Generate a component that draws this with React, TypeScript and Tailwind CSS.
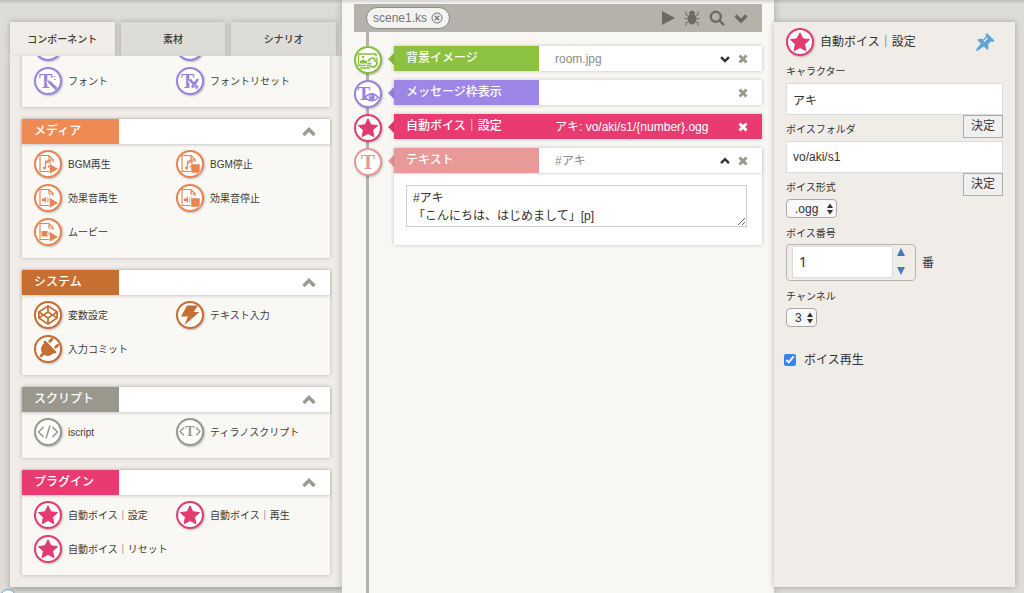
import { useState, type ReactNode } from "react";
import { FaCodepen, FaPlug } from "react-icons/fa";

type IconName =
  | "blank" | "font" | "fontReset" | "bgmPlay" | "bgmStop" | "sePlay" | "seStop" | "movie"
  | "codepen" | "bolt" | "plug" | "code" | "tyrano" | "star" | "image" | "message" | "text";

type Group = {
  title: string;
  bar: string;
  color: string;
  items: { label: string; icon: IconName }[];
};

const groups: Group[] = [
  {
    title: "",
    bar: "bg-[#9d86e6]",
    color: "text-[#9683dc]",
    items: [
      { label: "", icon: "blank" },
      { label: "", icon: "blank" },
      { label: "フォント", icon: "font" },
      { label: "フォントリセット", icon: "fontReset" },
    ],
  },
  {
    title: "メディア",
    bar: "bg-[#f08a54]",
    color: "text-[#e98350]",
    items: [
      { label: "BGM再生", icon: "bgmPlay" },
      { label: "BGM停止", icon: "bgmStop" },
      { label: "効果音再生", icon: "sePlay" },
      { label: "効果音停止", icon: "seStop" },
      { label: "ムービー", icon: "movie" },
    ],
  },
  {
    title: "システム",
    bar: "bg-[#c66f31]",
    color: "text-[#c66d32]",
    items: [
      { label: "変数設定", icon: "codepen" },
      { label: "テキスト入力", icon: "bolt" },
      { label: "入力コミット", icon: "plug" },
    ],
  },
  {
    title: "スクリプト",
    bar: "bg-[#9a978d]",
    color: "text-[#9a978d]",
    items: [
      { label: "iscript", icon: "code" },
      { label: "ティラノスクリプト", icon: "tyrano" },
    ],
  },
  {
    title: "プラグイン",
    bar: "bg-[#e93a72]",
    color: "text-[#e23b70]",
    items: [
      { label: "自動ボイス｜設定", icon: "star" },
      { label: "自動ボイス｜再生", icon: "star" },
      { label: "自動ボイス｜リセット", icon: "star" },
    ],
  },
];

const serif = { fontFamily: '"Liberation Serif", serif', fontWeight: 700 };

function FileShape() {
  return <path d="M13 19.500H4V3.500H13L17 7.500V10M13 3.500V8H17" fill="none" stroke="currentColor" strokeWidth="1.200" />;
}

function Note() {
  return (
    <g>
      <path d="M9.500 16V9.500L14 8V14M9.500 11L14 9.500" fill="none" stroke="currentColor" strokeWidth="1.200" />
      <circle cx="8.500" cy="16" r="1.500" fill="currentColor" />
      <circle cx="13" cy="14.500" r="1.300" fill="currentColor" />
    </g>
  );
}

function Speaker() {
  return (
    <g>
      <path d="M6 12.500H8L10 10.500V17L8 15H6Z" fill="currentColor" />
      <path d="M11.500 11.500Q13 13.700 11.500 16M13.500 10.500Q15.500 13.700 13.500 17" fill="none" stroke="currentColor" />
    </g>
  );
}

const play = <path d="M13.500 11.500L22.500 17L13.500 22Z" fill="currentColor" stroke="#fff" strokeWidth=".5" />;
const stop = <path d="M13 12H22V21H13Z" fill="currentColor" stroke="#fff" strokeWidth=".5" />;

const glyphs: Record<IconName, ReactNode> = {
  blank: null,
  font: (
    <g>
      <text x="3" y="18.500" fontSize="20" fill="currentColor" style={serif}>T</text>
      <path d="M11.500 11.500L20 20" stroke="#fff" strokeWidth="5" />
      <path d="M12 11.500L20.500 20" stroke="currentColor" strokeWidth="3" />
      <path d="M12.500 11L14.500 13" stroke="#fff" strokeWidth="1" />
      <path d="M16 8.500l1-1M18 10.500h1.500M18.500 8l1-1" stroke="currentColor" />
    </g>
  ),
  fontReset: (
    <g>
      <text x="3" y="18.500" fontSize="20" fill="currentColor" style={serif}>T</text>
      <path d="M20.500 9L13 20M11 11L17 16" stroke="#fff" strokeWidth="4" />
      <path d="M20 10L14 18.500M11.500 10.500L15.500 14.500" stroke="currentColor" strokeWidth="2.500" />
      <path d="M18.500 15.500v4.500M16.500 17.800h4" stroke="currentColor" strokeWidth="1.500" />
    </g>
  ),
  bgmPlay: <g><FileShape /><Note />{play}</g>,
  bgmStop: <g><FileShape /><Note />{stop}</g>,
  sePlay: <g><FileShape /><Speaker />{play}</g>,
  seStop: <g><FileShape /><Speaker />{stop}</g>,
  movie: (
    <g>
      <FileShape />
      <path d="M5.500 11H11.500V16.500H5.500ZM12 13.500L14 11.500V16Z" fill="currentColor" />
      {play}
    </g>
  ),
  codepen: <FaCodepen x="2" y="2" size={20} />,
  bolt: <path d="M9 2.500H20L15.500 9H21.500L6.500 22L10 13.500H3Z" fill="currentColor" />,
  plug: <g transform="rotate(45 12 12)"><FaPlug x="1" y="1" size={22} /></g>,
  code: <path d="M7.500 7L2.500 12L7.500 17M16.500 7L21.500 12L16.500 17M14 5.500L10 18.500" fill="none" stroke="currentColor" strokeWidth="1.500" />,
  tyrano: (
    <g>
      <path d="M6 7.500L2 11.500L6 15.500M18 7.500L22 11.500L18 15.500" fill="none" stroke="currentColor" strokeWidth="1.400" />
      <text x="12" y="16" fontSize="14" textAnchor="middle" fill="currentColor" style={serif}>T</text>
    </g>
  ),
  star: (
    <path
      d="M12 2.800L14.900 8.800L21.500 9.600L16.600 14.100L17.900 20.700L12 17.500L6.100 20.700L7.400 14.100L2.500 9.600L9.100 8.800Z"
      fill="currentColor" stroke="currentColor" strokeWidth="1" strokeLinejoin="round"
    />
  ),
  image: (
    <g fill="none" stroke="currentColor">
      <path d="M20 8.500V6H2.500V17.500H10" strokeWidth="1.500" />
      <path d="M4 15.500V13L7.500 11.500L10 13L14 10.500V15.500Z" fill="currentColor" stroke="none" />
      <circle cx="7" cy="9" r="1.200" fill="currentColor" stroke="none" />
      <circle cx="16.500" cy="14" r="5.500" fill="#fff" stroke="none" />
      <path d="M12.500 13.500A4 4 0 0 1 19.500 11.500M20.800 14A4 4 0 0 1 13.500 17" strokeWidth="1.800" />
      <path d="M21 9.500V13H17.500M12 19V15.500H15.500M4 20H14" strokeWidth="1.300" />
    </g>
  ),
  message: (
    <g>
      <text x="1.500" y="17.500" fontSize="19" fill="currentColor" style={serif}>T</text>
      <path d="M9 15.500Q15.500 8 22.500 15.500Q15.500 22 9 15.500Z" fill="#fff" stroke="currentColor" strokeWidth="1.300" />
      <circle cx="15.700" cy="15" r="3" fill="currentColor" />
      <circle cx="14.800" cy="14" r=".8" fill="#fff" />
    </g>
  ),
  text: <text x="12" y="19" fontSize="21" textAnchor="middle" fill="currentColor" style={serif}>T</text>,
};

function Badge({ icon, color }: { icon: IconName; color: string }) {
  return (
    <span className={`block size-7 shrink-0 rounded-full border-2 border-current bg-white shadow-[1px_1px_2px_rgba(0,0,0,0.25)] ${color}`}>
      <svg viewBox="0 0 24 24" className="size-6" aria-hidden="true">{glyphs[icon]}</svg>
    </span>
  );
}

function Chevron({ up, className }: { up?: boolean; className: string }) {
  return (
    <svg viewBox="0 0 14 14" className={className} fill="none" stroke="currentColor" strokeWidth="3.400" aria-hidden="true">
      <path d={up ? "M1.500 10L7 4.500L12.500 10" : "M1.500 4.500L7 10L12.500 4.500"} />
    </svg>
  );
}

function Cross() {
  return (
    <svg viewBox="0 0 10 10" className="size-2.5" stroke="currentColor" strokeWidth="3" aria-hidden="true">
      <path d="M1.500 1.500L8.500 8.500M8.500 1.500L1.500 8.500" />
    </svg>
  );
}

function Bug() {
  return (
    <svg viewBox="0 0 16 16" className="size-4" fill="none" stroke="currentColor" strokeWidth="1" aria-hidden="true">
      <ellipse cx="8" cy="9" rx="4.300" ry="5.500" fill="currentColor" stroke="none" />
      <path d="M5.500 3.500A2.500 2.500 0 0 1 10.500 3.500Z" fill="currentColor" />
      <path d="M5 6.500L2 5V1.500M11 6.500L14 5V1.500M4 8.700H0.500M12 8.700H15.500M5 11L2 12.500V15.500M11 11L14 12.500V15.500" />
    </svg>
  );
}

function Pin() {
  return (
    <svg viewBox="0 0 20 20" className="size-5" fill="currentColor" aria-hidden="true">
      <path d="M12 1L19.500 8.500L18 10L16 9.500L13 12.500Q14.500 16 12.300 18L8.800 14.500L3 18.500L1 19L1.500 17L5.800 11.500L2.300 8Q4.500 6 8 7.500L11 4.500L10.500 2.500Z" />
      <path d="M9 9.500L12.500 6" stroke="#f0ede8" strokeWidth="1.200" />
    </svg>
  );
}

function GroupCard({ group }: { group: Group }) {
  return (
    <section className="shrink-0 bg-[#f9f8f5] shadow-[0_0_4px_rgba(0,0,0,0.25)]">
      <header className="flex h-[25px] items-center bg-white shadow-[0_1px_3px_rgba(0,0,0,0.2)]">
        <h2 className={`h-full w-[97px] pl-3 text-xs leading-[25px] font-medium text-white ${group.bar}`}>{group.title}</h2>
        <button type="button" aria-label="折りたたむ" className="mr-3.5 ml-auto text-[#9b9a92]">
          <Chevron up className="size-3.5" />
        </button>
      </header>
      <ul className="grid grid-cols-[142px_1fr] pt-[3px] pb-[9px] pl-3">
        {group.items.map((item, i) => (
          <li key={i} className="flex h-[34px] items-center gap-1.5">
            <Badge icon={item.icon} color={group.color} />
            <span className="text-[10px] text-[#3c3b37]">{item.label}</span>
          </li>
        ))}
      </ul>
    </section>
  );
}

const tabs = ["コンポーネント", "素材", "シナリオ"];

function Sidebar() {
  const [tab, setTab] = useState(0);
  return (
    <aside className="flex w-[342px] flex-col pt-[22px] pb-1.5 pl-2.5">
      <div role="tablist" className="flex h-[34px] shrink-0 gap-1.5 pr-1.5">
        {tabs.map((t, i) => (
          <button
            key={t} type="button" role="tab" aria-selected={i === tab} onClick={() => setTab(i)}
            className={`flex-1 text-[10px] font-medium text-[#3c3b37] shadow-[0_0_6px_rgba(0,0,0,0.25)] ${i === tab ? "bg-[#f0ede8]" : "bg-[#dddcd7]"}`}
          >{t}</button>
        ))}
      </div>
      <div className="min-h-0 flex-1 shadow-[0_3px_6px_rgba(0,0,0,0.25)]">
        <div className="flex h-full flex-col justify-end gap-3 overflow-hidden bg-[#f0ede8] pr-3 pb-3 pl-3">
          {groups.map((g) => <GroupCard key={g.title} group={g} />)}
        </div>
      </div>
    </aside>
  );
}

type RowProps = {
  icon: IconName;
  color: string;
  bar: string;
  title: string;
  value: string;
  selected?: boolean;
  toggle?: "up" | "down";
  children?: ReactNode;
};

function Row({ icon, color, bar, title, value, selected, toggle, children }: RowProps) {
  return (
    <li className="flex items-start">
      <Badge icon={icon} color={color} />
      <svg viewBox="0 0 6 12" className={`mt-[7px] ml-1.5 h-3 w-1.5 shrink-0 ${color}`} fill="currentColor" aria-hidden="true">
        <path d="M6 0V12L0 6Z" />
      </svg>
      <div className="min-w-0 flex-1 bg-white shadow-[0_0_4px_rgba(0,0,0,0.22)]">
        <div className={`flex h-[25px] items-center text-xs ${selected ? "bg-[#e93a72] text-white" : "text-[#8d8b84]"} ${children ? "shadow-[0_1px_2px_rgba(0,0,0,0.15)]" : ""}`}>
          <h3 className={`h-full w-[145px] shrink-0 pl-3 leading-[25px] font-medium text-white ${bar}`}>{title}</h3>
          <span className="min-w-0 flex-1 truncate pl-4">{value}</span>
          {toggle && (
            <button type="button" aria-label="開閉" className="mr-2 text-[#33322f]">
              <Chevron up={toggle === "up"} className="size-2.5" />
            </button>
          )}
          <button type="button" aria-label="削除" className={`mr-3.5 ${selected ? "text-white" : "text-[#9b9a8f]"}`}>
            <Cross />
          </button>
        </div>
        {children}
      </div>
    </li>
  );
}

function Scene() {
  return (
    <main className="flex flex-1 flex-col bg-[#f8f7f4] px-3 pt-1 shadow-[0_0_8px_rgba(0,0,0,0.25)]">
      <div className="flex h-7 shrink-0 items-center bg-[#b5b2ab] pr-3.5 pl-3 text-[#6b6a63]">
        <div className="flex h-[22px] items-center gap-1 rounded-full border border-[#8c8a84] bg-[#f3f3f2] px-1.5 text-xs text-[#77756f]">
          scene1.ks
          <button type="button" aria-label="閉じる">
            <svg viewBox="0 0 12 12" className="size-3" fill="none" stroke="currentColor" aria-hidden="true">
              <circle cx="6" cy="6" r="5" />
              <path d="M3.800 3.800L8.200 8.200M8.200 3.800L3.800 8.200" strokeWidth="1.300" />
            </svg>
          </button>
        </div>
        <div className="ml-auto flex items-center gap-[9px]">
          <button type="button" aria-label="再生">
            <svg viewBox="0 0 14 14" className="size-3.5" fill="currentColor" aria-hidden="true"><path d="M1 0L14 7L1 14Z" /></svg>
          </button>
          <button type="button" aria-label="デバッグ"><Bug /></button>
          <button type="button" aria-label="検索">
            <svg viewBox="0 0 16 16" className="size-4" fill="none" stroke="currentColor" strokeWidth="2.400" strokeLinecap="round" aria-hidden="true">
              <circle cx="6.800" cy="6.800" r="5" />
              <path d="M10.700 10.700L14.300 14.300" />
            </svg>
          </button>
          <button type="button" aria-label="メニュー"><Chevron className="size-3.5" /></button>
        </div>
      </div>
      <div className="relative flex-1 pt-3.5">
        <div className="absolute inset-y-0 left-3 w-[3px] bg-[#b5b2ab]" />
        <ul className="relative flex flex-col gap-1.5">
          <Row icon="image" color="text-[#87bf3e]" bar="bg-[#8bc23f]" title="背景イメージ" value="room.jpg" toggle="down" />
          <Row icon="message" color="text-[#9683dc]" bar="bg-[#9d86e6]" title="メッセージ枠表示" value="" />
          <Row icon="star" color="text-[#e23b70]" bar="bg-[#e93a72]" title="自動ボイス｜設定" value="アキ: vo/aki/s1/{number}.ogg" selected />
          <Row icon="text" color="text-[#e59a96]" bar="bg-[#e79a97]" title="テキスト" value="#アキ" toggle="up">
            <div className="px-3 pt-3 pb-[18px]">
              <textarea
                aria-label="テキスト" defaultValue={"#アキ\n「こんにちは、はじめまして」[p]"}
                className="block h-[42px] w-[341px] max-w-full border border-[#cfcfcd] bg-white px-1.5 py-[3px] text-xs leading-[18px] text-[#33322f]"
              />
            </div>
          </Row>
        </ul>
      </div>
    </main>
  );
}

function Select({ id, value, width }: { id: string; value: string; width: string }) {
  return (
    <div className={`relative h-[19px] ${width}`}>
      <select id={id} defaultValue={value} className="block h-full w-full appearance-none rounded-[4px] border border-[#a9a9a9] bg-[#f8f8f8] pl-2 text-xs leading-4 text-[#33322f]">
        <option>{value}</option>
      </select>
      <svg viewBox="0 0 6 12" className="pointer-events-none absolute top-1 right-1 h-3 w-1.5" fill="#33322f" aria-hidden="true">
        <path d="M0 5L3 0.500L6 5ZM0 7L3 11.500L6 7Z" />
      </svg>
    </div>
  );
}

const labelCls = "text-[10px] leading-4 text-[#33322f]";
const inputCls = "h-8 w-full border border-[#dcdcda] bg-white px-1.5 text-xs text-[#33322f]";
const okCls = "h-[23px] w-10 border border-[#adadad] bg-[#f0f0f0] pb-0.5 text-xs text-[#33322f]";

function Inspector() {
  const [num, setNum] = useState(1);
  return (
    <aside className="flex w-[250px] flex-col pt-[22px] pr-[9px] pb-1.5">
      <form className="flex flex-1 flex-col bg-[#f0ede8] pt-1.5 pr-3 pl-3 shadow-[0_0_6px_rgba(0,0,0,0.25)]" onSubmit={(e) => e.preventDefault()}>
        <div className="flex items-center gap-1.5">
          <Badge icon="star" color="text-[#e23b70]" />
          <h2 className="text-xs text-[#33322f]">自動ボイス｜設定</h2>
          <button type="button" aria-label="ピン留め" className="mr-2 ml-auto text-[#61a6d3]"><Pin /></button>
        </div>
        <label htmlFor="chara" className={`mt-2 mb-[3px] ${labelCls}`}>キャラクター</label>
        <input id="chara" className={inputCls} defaultValue="アキ" />
        <div className="flex h-[26px] items-start justify-between">
          <label htmlFor="folder" className={`pt-[7px] ${labelCls}`}>ボイスフォルダ</label>
          <button type="button" className={okCls}>決定</button>
        </div>
        <input id="folder" className={inputCls} defaultValue="vo/aki/s1" />
        <div className="flex h-[26px] items-start justify-between">
          <label htmlFor="format" className={`pt-[7px] ${labelCls}`}>ボイス形式</label>
          <button type="button" className={okCls}>決定</button>
        </div>
        <Select id="format" value=".ogg" width="w-[51px]" />
        <label htmlFor="number" className={`mt-2 mb-0.5 ${labelCls}`}>ボイス番号</label>
        <div className="flex items-center gap-1.5 text-xs text-[#33322f]">
          <div className="flex h-[37px] w-[130px] items-start rounded-[4px] border border-[#b3b3b1] pt-px pr-1.5 pl-[5px]">
            <input
              id="number" value={num} onChange={(e) => setNum(Number(e.target.value) || 0)}
              className='h-8 w-[101px] border border-[#dcdcda] bg-white px-1.5 pb-0.5 font-["Noto_Sans",sans-serif] text-sm'
            />
            <div className="flex h-[29px] flex-1 flex-col items-center justify-between pt-0.5 text-[#4479bd]">
              <button type="button" aria-label="増やす" onClick={() => setNum(num + 1)}>
                <svg viewBox="0 0 8 8" className="block size-2" fill="currentColor"><path d="M0 8L4 0L8 8Z" /></svg>
              </button>
              <button type="button" aria-label="減らす" onClick={() => setNum(num - 1)}>
                <svg viewBox="0 0 8 8" className="block size-2" fill="currentColor"><path d="M0 0L4 8L8 0Z" /></svg>
              </button>
            </div>
          </div>
          番
        </div>
        <label htmlFor="channel" className={`mt-2 mb-[3px] ${labelCls}`}>チャンネル</label>
        <Select id="channel" value="3" width="w-[31px]" />
        <label className="mt-6 -ml-0.5 flex items-center gap-2 text-xs leading-[18px] text-[#33322f]">
          <input type="checkbox" defaultChecked className="size-3 accent-[#3b82f0]" />
          ボイス再生
        </label>
      </form>
    </aside>
  );
}

export default function App() {
  return (
    <div className='relative flex h-screen overflow-hidden bg-[#dddcd7] font-["Liberation_Sans","Noto_Sans_CJK_JP",sans-serif]'>
      <Sidebar />
      <Scene />
      <Inspector />
      <div className="pointer-events-none absolute inset-x-0 top-0 h-1 bg-gradient-to-b from-black/15 to-transparent" />
      <div className="absolute -bottom-3 left-0 size-4 rounded-full border border-[#5b9fd0] bg-white" />
    </div>
  );
}
